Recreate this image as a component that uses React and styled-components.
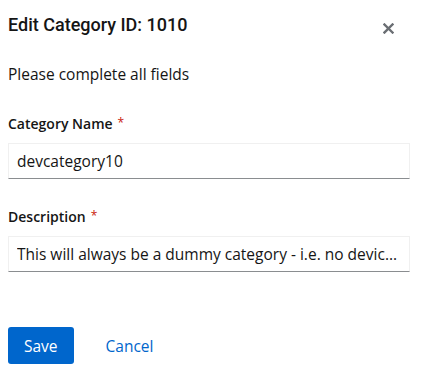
import React from 'react';
import styled, { createGlobalStyle } from 'styled-components';

const GlobalStyle = createGlobalStyle`
  body {
    margin: 0;
    background: #ffffff;
    font-family: 'Open Sans', 'Liberation Sans', sans-serif;
    color: #151515;
  }
`;

const Modal = styled.div`
  width: 402px;
  padding: 0 8px;
  display: flex;
  flex-direction: column;
`;

const Header = styled.div`
  display: flex;
  align-items: flex-start;
  justify-content: space-between;
  padding-top: 13px;
`;

const Title = styled.h1`
  margin: 0;
  font-family: Roboto, 'Open Sans', sans-serif;
  font-size: 18px;
  line-height: 24px;
  font-weight: 500;
  color: #151515;
`;

const CloseButton = styled.button`
  border: 0;
  background: none;
  padding: 0;
  margin: 9px 16px 0 0;
  width: 12px;
  height: 12px;
  display: flex;
  align-items: center;
  justify-content: center;
  cursor: pointer;
`;

const Intro = styled.p`
  margin: 26px 0 0;
  font-size: 15.5px;
  line-height: 22px;
  color: #151515;
`;

const Form = styled.form`
  display: flex;
  flex-direction: column;
  gap: 27px;
  margin-top: 28px;
`;

const Field = styled.div`
  display: flex;
  flex-direction: column;
  gap: 9px;
`;

const Label = styled.label`
  font-size: 14px;
  line-height: 20px;
  font-weight: 600;
  color: #151515;
`;

const Required = styled.span`
  color: #c9190b;
  margin-left: 5px;
  font-size: 12px;
  font-weight: 400;
  vertical-align: 2px;
`;

const Input = styled.input`
  box-sizing: border-box;
  width: 100%;
  height: 36px;
  padding: 0 8px;
  font-family: inherit;
  font-size: 15.5px;
  color: #151515;
  background: #fff;
  border: 1px solid #f0f0f0;
  border-bottom-color: #8a8d90;
  outline: none;
  text-overflow: ellipsis;
`;

const Actions = styled.div`
  display: flex;
  align-items: center;
  gap: 16px;
  margin-top: 55px;
`;

const PrimaryButton = styled.button`
  height: 37px;
  padding: 0 16px;
  border: 0;
  border-radius: 3px;
  background: #0066cc;
  color: #fff;
  font-family: inherit;
  font-size: 15.5px;
  cursor: pointer;
`;

const LinkButton = styled.button`
  height: 37px;
  padding: 0 16px;
  border: 0;
  background: none;
  color: #0066cc;
  font-family: inherit;
  font-size: 15.5px;
  cursor: pointer;
`;

export default function App() {
  return (
    <>
      <GlobalStyle />
      <Modal>
        <Header>
          <Title>Edit Category ID: 1010</Title>
          <CloseButton aria-label="Close">
            <svg width="11" height="11" viewBox="0 0 11 11">
              <path d="M1.5 1.5 L9.5 9.5 M9.5 1.5 L1.5 9.5" stroke="#6a6e73" strokeWidth="2.4" strokeLinecap="square" />
            </svg>
          </CloseButton>
        </Header>
        <Intro>Please complete all fields</Intro>
        <Form onSubmit={(e) => e.preventDefault()}>
          <Field>
            <Label>Category Name<Required>*</Required></Label>
            <Input defaultValue="devcategory10" />
          </Field>
          <Field>
            <Label>Description<Required>*</Required></Label>
            <Input defaultValue="This will always be a dummy category - i.e. no devices will ever be assigned" />
          </Field>
        </Form>
        <Actions>
          <PrimaryButton>Save</PrimaryButton>
          <LinkButton>Cancel</LinkButton>
        </Actions>
      </Modal>
    </>
  );
}
